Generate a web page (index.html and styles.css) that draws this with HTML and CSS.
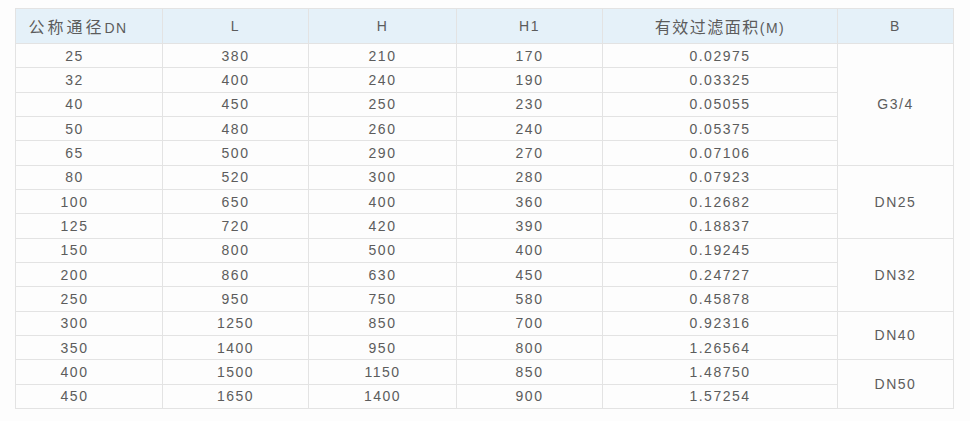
FILE: index.html
```html
<!DOCTYPE html>
<html lang="zh">
<head>
<meta charset="utf-8">
<title>参数表</title>
<link rel="stylesheet" href="styles.css">
</head>
<body>
<div class="page">
<table class="spec">
<colgroup>
<col class="c1"><col class="c2"><col class="c3"><col class="c4"><col class="c5"><col class="c6">
</colgroup>
<thead>
<tr>
<th class="first head-first"><span class="cjk wide">公称通径</span>DN</th>
<th>L</th>
<th>H</th>
<th>H1</th>
<th><span class="cjk">有效过滤面积</span>(M)</th>
<th>B</th>
</tr>
</thead>
<tbody>
<tr><td class="first">25</td><td>380</td><td>210</td><td>170</td><td>0.02975</td><td rowspan="5">G3/4</td></tr>
<tr><td class="first">32</td><td>400</td><td>240</td><td>190</td><td>0.03325</td></tr>
<tr><td class="first">40</td><td>450</td><td>250</td><td>230</td><td>0.05055</td></tr>
<tr><td class="first">50</td><td>480</td><td>260</td><td>240</td><td>0.05375</td></tr>
<tr><td class="first">65</td><td>500</td><td>290</td><td>270</td><td>0.07106</td></tr>
<tr><td class="first">80</td><td>520</td><td>300</td><td>280</td><td>0.07923</td><td rowspan="3">DN25</td></tr>
<tr><td class="first">100</td><td>650</td><td>400</td><td>360</td><td>0.12682</td></tr>
<tr><td class="first">125</td><td>720</td><td>420</td><td>390</td><td>0.18837</td></tr>
<tr><td class="first">150</td><td>800</td><td>500</td><td>400</td><td>0.19245</td><td rowspan="3">DN32</td></tr>
<tr><td class="first">200</td><td>860</td><td>630</td><td>450</td><td>0.24727</td></tr>
<tr><td class="first">250</td><td>950</td><td>750</td><td>580</td><td>0.45878</td></tr>
<tr><td class="first">300</td><td>1250</td><td>850</td><td>700</td><td>0.92316</td><td rowspan="2">DN40</td></tr>
<tr><td class="first">350</td><td>1400</td><td>950</td><td>800</td><td>1.26564</td></tr>
<tr><td class="first">400</td><td>1500</td><td>1150</td><td>850</td><td>1.48750</td><td rowspan="2">DN50</td></tr>
<tr><td class="first">450</td><td>1650</td><td>1400</td><td>900</td><td>1.57254</td></tr>
</tbody>
</table>
</div>
</body>
</html>
```
FILE: styles.css
```css
html, body {
  margin: 0;
  padding: 0;
  background: #fdfdfd;
}
.page {
  padding: 8px 0 0 15px;
}
.spec {
  border-collapse: collapse;
  table-layout: fixed;
  width: 938px;
  font-family: "Liberation Sans", "Noto Sans CJK SC", sans-serif;
  font-size: 14px;
  letter-spacing: 1.5px;
  color: #5c5c5c;
  background: #fdfdfd;
}
.c1 { width: 147px; }
.c2 { width: 146px; }
.c3 { width: 148px; }
.c4 { width: 146px; }
.c5 { width: 235px; }
.c6 { width: 116px; }
.spec th,
.spec td {
  border: 1px solid #e3e3e3;
  text-align: center;
  vertical-align: middle;
  padding: 0;
  font-weight: normal;
}
.spec thead tr {
  height: 35px;
}
.spec th {
  background: #e5f1f9;
}
.spec tbody tr {
  height: 24.33px;
}
.spec .first {
  padding-right: 29px;
}
.spec .head-first {
  padding-right: 22px;
}
.cjk {
  font-family: "Noto Sans CJK SC", sans-serif;
  font-size: 16px;
  letter-spacing: 1.5px;
}
.cjk.wide {
  letter-spacing: 3px;
}
```
